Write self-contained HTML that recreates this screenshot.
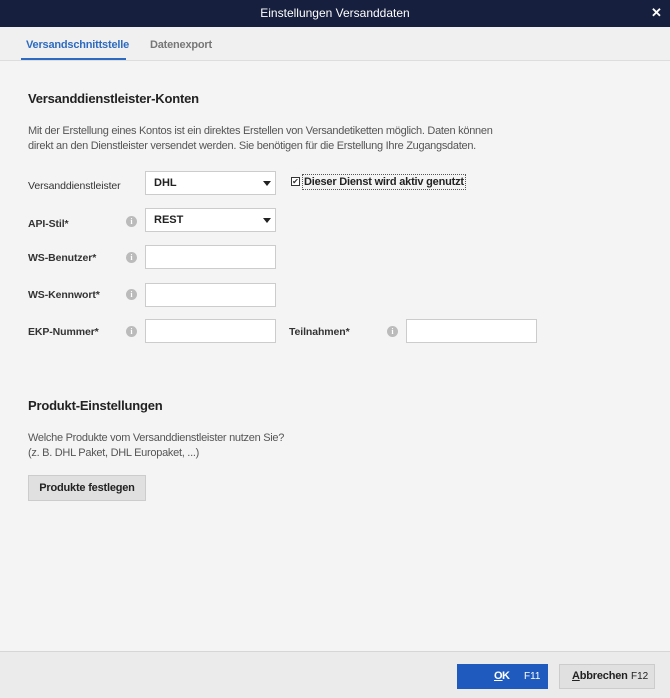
<!DOCTYPE html>
<html><head><meta charset="utf-8"><style>
*{box-sizing:border-box;margin:0;padding:0}
body{width:670px;height:698px;background:#f4f4f4;font-family:"Liberation Sans",sans-serif;font-size:11px;color:#333;position:relative;overflow:hidden}
.abs{position:absolute}
.title{left:0;top:0;width:670px;height:27px;background:#161f3d;color:#fff;font-size:12px;text-align:center;line-height:27px}
.x{right:0;top:0;width:27px;height:27px;color:#fff;font-size:13px;font-weight:bold;text-align:center;line-height:26px}
.tabs{left:0;top:27px;width:670px;height:34px;background:#f0f0f0;border-bottom:1px solid #ddd}
.tab{top:39px;font-size:11px;font-weight:bold;letter-spacing:-0.2px}
h2{position:absolute;font-size:13px;font-weight:bold;color:#222;letter-spacing:-0.2px}
.lbl{font-size:10.5px;color:#333;font-weight:bold;letter-spacing:-0.1px}
.box{background:#fff;border:1px solid #ccc;width:131px;height:24px}
.sel{padding-left:8px;line-height:22px;font-size:11px;color:#222;font-weight:bold}
.sel:after{content:"";position:absolute;right:4px;top:9px;border-left:4px solid transparent;border-right:4px solid transparent;border-top:5px solid #222}
.i{width:11px;height:11px;border-radius:50%;background:#bbb;color:#fff;font-size:8px;font-weight:bold;text-align:center;line-height:11px;font-family:"Liberation Serif",serif}
p{position:absolute;font-size:11px;color:#555;line-height:15px;letter-spacing:-0.28px}
</style></head><body>
<div class="abs title">Einstellungen Versanddaten</div>
<div class="abs x">✕</div>
<div class="abs tabs"></div>
<div class="abs tab" style="left:26px;color:#2e6bc0">Versandschnittstelle</div>
<div class="abs" style="left:21px;top:58px;width:105px;height:2px;background:#2e6bc0"></div>
<div class="abs tab" style="left:150px;color:#777">Datenexport</div>
<h2 style="left:28px;top:91px">Versanddienstleister-Konten</h2>
<p style="left:28px;top:124px">Mit der Erstellung eines Kontos ist ein direktes Erstellen von Versandetiketten möglich. Daten können<br>direkt an den Dienstleister versendet werden. Sie benötigen für die Erstellung Ihre Zugangsdaten.</p>
<div class="abs lbl" style="left:28px;top:180px;font-weight:normal">Versanddienstleister</div>
<div class="abs box sel" style="left:145px;top:171px">DHL</div>
<div class="abs" style="left:291px;top:177px;width:9px;height:9px;border:1px solid #333;background:#fff;font-size:8px;line-height:7px;text-align:center">✔</div>
<div class="abs" style="left:302px;top:174px;border:1px dotted #555;padding:1px 1px;font-size:11px;color:#222;font-weight:bold;letter-spacing:-0.2px">Dieser Dienst wird aktiv genutzt</div>
<div class="abs lbl" style="left:28px;top:218px">API-Stil*</div>
<div class="abs i" style="left:126px;top:216px">i</div>
<div class="abs box sel" style="left:145px;top:208px">REST</div>
<div class="abs lbl" style="left:28px;top:252px">WS-Benutzer*</div>
<div class="abs i" style="left:126px;top:252px">i</div>
<div class="abs box" style="left:145px;top:245px"></div>
<div class="abs lbl" style="left:28px;top:289px">WS-Kennwort*</div>
<div class="abs i" style="left:126px;top:289px">i</div>
<div class="abs box" style="left:145px;top:283px"></div>
<div class="abs lbl" style="left:28px;top:326px">EKP-Nummer*</div>
<div class="abs i" style="left:126px;top:326px">i</div>
<div class="abs box" style="left:145px;top:319px"></div>
<div class="abs lbl" style="left:289px;top:326px">Teilnahmen*</div>
<div class="abs i" style="left:387px;top:326px">i</div>
<div class="abs box" style="left:406px;top:319px"></div>
<h2 style="left:28px;top:398px">Produkt-Einstellungen</h2>
<p style="left:28px;top:431px">Welche Produkte vom Versanddienstleister nutzen Sie?<br>(z. B. DHL Paket, DHL Europaket, ...)</p>
<div class="abs" style="left:28px;top:475px;width:118px;height:26px;background:#e0e0e0;border:1px solid #ccc;text-align:center;line-height:24px;font-weight:bold;color:#222;letter-spacing:-0.2px">Produkte festlegen</div>
<div class="abs" style="left:0;top:651px;width:670px;height:47px;background:#ebebeb;border-top:1px solid #d6d6d6"></div>
<div class="abs" style="left:457px;top:664px;width:91px;height:25px;background:#1f5bbf;color:#fff;line-height:25px;font-size:11px"><span style="position:absolute;left:37px;font-weight:bold;text-decoration:underline">O</span><span style="position:absolute;left:45px;font-weight:bold">K</span><span style="position:absolute;left:67px;font-size:10px">F11</span></div>
<div class="abs" style="left:559px;top:664px;width:96px;height:25px;background:#e0e0e0;border:1px solid #ccc;line-height:23px;color:#222"><span style="position:absolute;left:12px;font-weight:bold;letter-spacing:-0.2px"><u>A</u>bbrechen</span><span style="position:absolute;left:71px;font-size:10px">F12</span></div>
</body></html>
